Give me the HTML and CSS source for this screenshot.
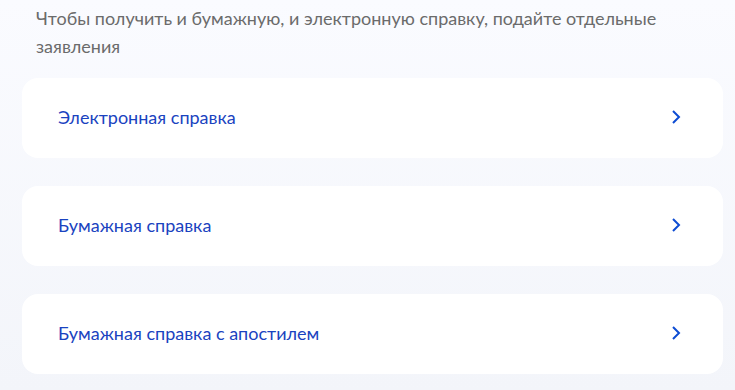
FILE: index.html
```html
<!DOCTYPE html>
<html lang="ru">
<head>
    <meta charset="UTF-8">
    <title>Справка</title>
    <link rel="stylesheet" href="styles.css">
</head>
<body>
    <div class="page">
        <p class="hint">Чтобы получить и бумажную, и электронную справку, подайте отдельные заявления</p>

        <div class="options">
            <a class="option" href="#">
                <span>Электронная справка</span>
                <svg class="chevron" width="10" height="16" viewBox="0 0 10 16"><path d="M2 2l6 6-6 6" fill="none" stroke="#0d4cd3" stroke-width="2"/></svg>
            </a>
            <a class="option" href="#">
                <span>Бумажная справка</span>
                <svg class="chevron" width="10" height="16" viewBox="0 0 10 16"><path d="M2 2l6 6-6 6" fill="none" stroke="#0d4cd3" stroke-width="2"/></svg>
            </a>
            <a class="option" href="#">
                <span>Бумажная справка с апостилем</span>
                <svg class="chevron" width="10" height="16" viewBox="0 0 10 16"><path d="M2 2l6 6-6 6" fill="none" stroke="#0d4cd3" stroke-width="2"/></svg>
            </a>
        </div>
    </div>
</body>
</html>
```

FILE: styles.css
```css
* {
    margin: 0;
    padding: 0;
    box-sizing: border-box;
}

body {
    background: linear-gradient(180deg, #fafbff 0%, #f3f5fa 100%);
    font-family: Lato, "Noto Sans", sans-serif;
    height: 390px;
    overflow: hidden;
}

.page {
    padding: 4px 12px 0 22px;
}

/* Top note */
.hint {
    padding-left: 14px;
    font-size: 18px;
    line-height: 28px;
    color: #6b6b6b;
}

/* Option cards */
.options {
    margin-top: 18px;
    display: flex;
    flex-direction: column;
    gap: 28px;
}

.option {
    display: flex;
    align-items: center;
    justify-content: space-between;
    height: 80px;
    padding: 0 42px 2px 36px;
    background: #fff;
    border-radius: 16px;
    color: #1a43c0;
    font-size: 18px;
    text-decoration: none;
}

.chevron {
    display: block;
}
```
